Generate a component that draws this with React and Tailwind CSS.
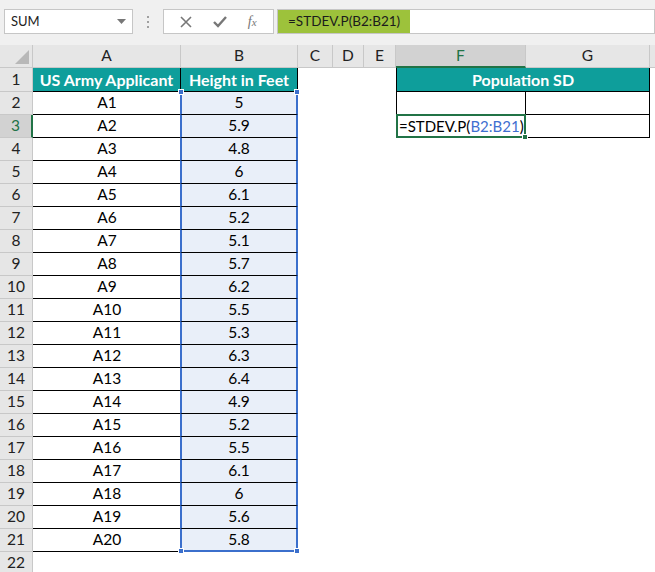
import { Fragment } from "react";

const data = [
  ["A1", "5"], ["A2", "5.9"], ["A3", "4.8"], ["A4", "6"], ["A5", "6.1"],
  ["A6", "5.2"], ["A7", "5.1"], ["A8", "5.7"], ["A9", "6.2"], ["A10", "5.5"],
  ["A11", "5.3"], ["A12", "6.3"], ["A13", "6.4"], ["A14", "4.9"], ["A15", "5.2"],
  ["A16", "5.5"], ["A17", "6.1"], ["A18", "6"], ["A19", "5.6"], ["A20", "5.8"],
];

const cols = ["A", "B", "C", "D", "E", "F", "G"];

function Handle({ className }) {
  return <div className={`absolute w-[6px] h-[6px] bg-[#3b6fcc] border border-white ${className}`} />;
}

function FormulaBar() {
  return (
    <div className="h-[45px] bg-[#f0f0f0] flex items-start pt-[9px] pl-[4px]">
      <div className="w-[129px] h-[25px] bg-white border border-[#c6c6c6] flex items-center justify-between pl-[6px] pr-[6px] text-[13px] text-[#222]">
        <span>SUM</span>
        <svg width="9" height="5" viewBox="0 0 9 5"><path d="M0 0h9L4.5 5z" fill="#777" /></svg>
      </div>
      <div className="w-[30px] h-[25px] flex flex-col items-center justify-center gap-[3px]">
        <div className="w-[2px] h-[2px] bg-[#a0a0a0]" />
        <div className="w-[2px] h-[2px] bg-[#a0a0a0]" />
        <div className="w-[2px] h-[2px] bg-[#a0a0a0]" />
      </div>
      <div className="w-[111px] h-[25px] bg-white border border-[#c6c6c6] flex items-center justify-around px-[6px]">
        <svg width="12" height="12" viewBox="0 0 12 12"><path d="M1 1l10 10M11 1L1 11" stroke="#777" strokeWidth="1.6" /></svg>
        <svg width="14" height="12" viewBox="0 0 14 12"><path d="M1 6l4 4 8-9" stroke="#777" strokeWidth="2.4" fill="none" /></svg>
        <span className="text-[14px] italic text-[#777] font-['Liberation_Serif',serif]">f<span className="text-[11px]">x</span></span>
      </div>
      <div className="flex-1 ml-[3px] h-[25px] bg-white border border-[#c6c6c6] flex items-center">
        <span className="h-full bg-[#9dc23b] flex items-center pl-[10px] pr-[10px] text-[13.5px] text-[#1c1c1c]">=STDEV.P(B2:B21)</span>
      </div>
    </div>
  );
}

export default function App() {
  return (
    <div className="w-[655px] h-[572px] overflow-hidden bg-white font-['Lato','Liberation_Sans',sans-serif] text-[15.5px] text-black">
      <FormulaBar />
      <div className="grid grid-cols-[33px_148px_117px_35px_31px_32px_130px_124px_1fr] grid-rows-[23px_24px_repeat(21,23px)]">
        {/* column headers */}
        <div className="bg-[#e6e6e6] border-r border-b border-[#c8c8c8] flex items-end justify-end p-[3px]">
          <svg width="14" height="14" viewBox="0 0 14 14"><path d="M14 0V14H0z" fill="#b8b8b8" /></svg>
        </div>
        {cols.map((c) => (
          <div
            key={c}
            className={`border-r border-[#c8c8c8] flex items-center justify-center ${
              c === "F" ? "bg-[#d2d2d2] text-[#217346] border-b-2 border-b-[#217346]" : "bg-[#e6e6e6] text-[#222] border-b"
            }`}
          >
            {c}
          </div>
        ))}
        <div className="bg-[#e6e6e6] border-b border-[#c8c8c8]" />

        {/* row 1 */}
        <div className="bg-[#e6e6e6] border-r border-b border-[#c8c8c8] flex items-center justify-center text-[#222]">1</div>
        <div className="bg-[#0e9e9b] text-white font-bold text-[16px] border-r border-b border-black flex items-center justify-center">US Army Applicant</div>
        <div className="bg-[#0e9e9b] text-white font-bold text-[16px] border-r border-b border-black flex items-center justify-center">Height in Feet</div>
        <div />
        <div />
        <div />
        <div className="col-span-2 bg-[#0e9e9b] text-white font-bold text-[16px] border-l border-r border-b border-black flex items-center justify-center">Population SD</div>
        <div />

        {data.map(([a, b], i) => {
          const r = i + 2;
          const first = i === 0;
          const last = i === data.length - 1;
          return (
            <Fragment key={r}>
              <div
                className={`border-b border-[#c8c8c8] flex items-center justify-center ${
                  r === 3 ? "bg-[#d2d2d2] text-[#217346] border-r-2 border-r-[#217346]" : "bg-[#e6e6e6] text-[#222] border-r"
                }`}
              >
                {r}
              </div>
              <div className="border-b border-black flex items-center justify-center">{a}</div>
              <div
                className={`relative -ml-[1px] bg-[#e9eff9] border-l-2 border-r-2 border-[#3b6fcc] flex items-center justify-center ${
                  last ? "border-b-2 border-b-[#3b6fcc]" : "border-b border-b-black"
                }`}
              >
                {b}
                {first && <Handle className="-top-[3px] -left-[4px]" />}
                {first && <Handle className="-top-[3px] -right-[4px]" />}
                {last && <Handle className="-bottom-[4px] -left-[4px]" />}
                {last && <Handle className="-bottom-[4px] -right-[4px]" />}
              </div>
              <div />
              <div />
              <div />
              {r === 2 && (
                <>
                  <div className="border-l border-r border-b border-black" />
                  <div className="border-r border-b border-black" />
                </>
              )}
              {r === 3 && (
                <>
                  <div className="relative -mt-[1px] border-2 border-[#217346] flex items-center pl-[1px] whitespace-nowrap text-[15px]">
                    <span>=STDEV.P(</span>
                    <span className="text-[#3f6fd0]">B2:B21</span>
                    <span>)</span>
                    <div className="absolute -bottom-[4px] -right-[4px] w-[6px] h-[6px] bg-[#217346] border border-white" />
                  </div>
                  <div className="border-r border-b border-black" />
                </>
              )}
              {r > 3 && (
                <>
                  <div />
                  <div />
                </>
              )}
              <div />
            </Fragment>
          );
        })}

        {/* row 22 */}
        <div className="bg-[#e6e6e6] border-r border-b border-[#c8c8c8] flex items-center justify-center text-[#222]">22</div>
      </div>
    </div>
  );
}
